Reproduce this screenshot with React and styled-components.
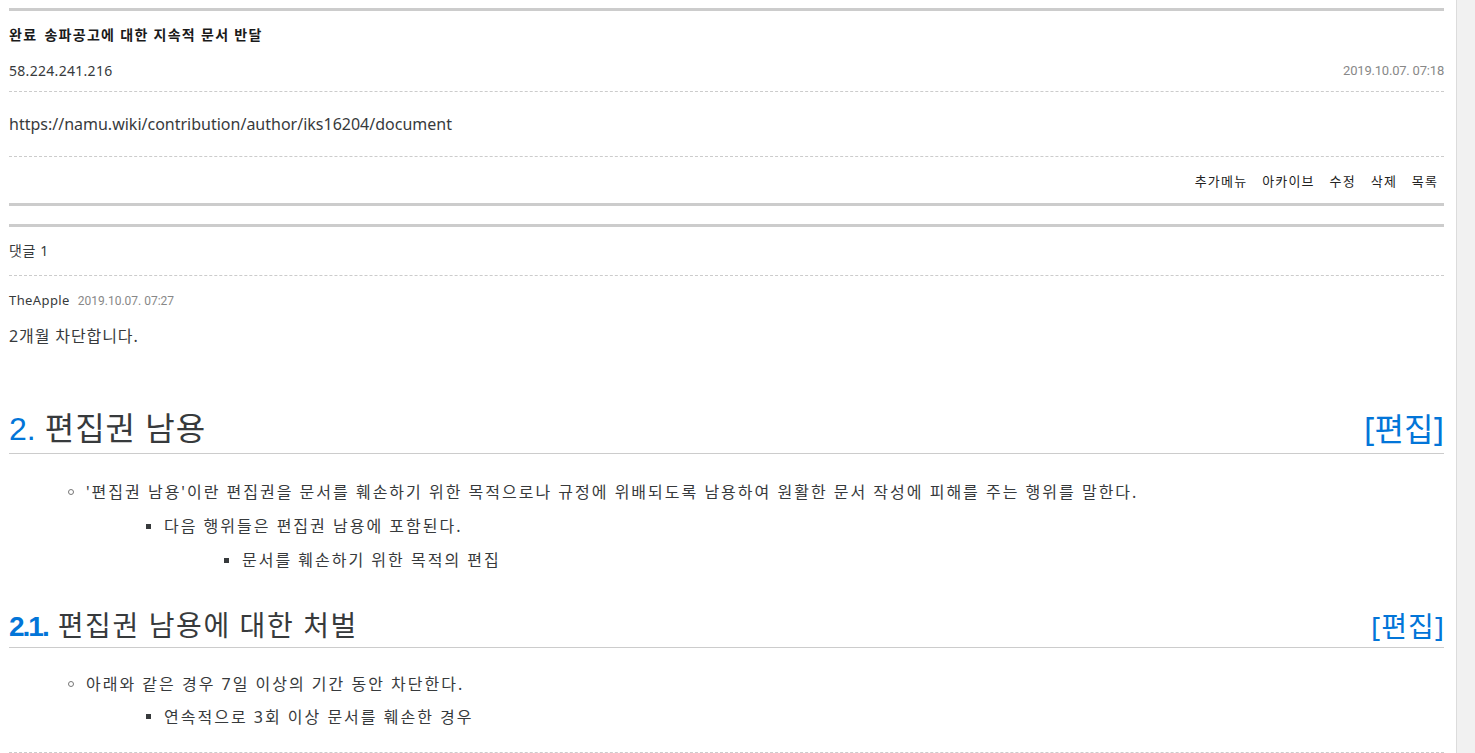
import React from 'react'
import { styled, createGlobalStyle } from "styled-components";

const GlobalStyle = createGlobalStyle`
  html, body {
    margin: 0;
    padding: 0;
    overflow: hidden;
    background: #ffffff;
  }
  body {
    font-family: "Noto Sans", "Noto Sans CJK KR", sans-serif;
    color: #373a3c;
  }
`;

const Page = styled.div`
  display: flex;
  width: 1475px;
  height: 753px;
  overflow: hidden;
`;

const Main = styled.main`
  flex: 1;
  padding: 8px 12px 0 9px;
  min-width: 0;
`;

const Scrollbar = styled.div`
  width: 18px;
  border-left: 1px solid #dcdcdc;
  background: #f1f1f1;
`;

const Thread = styled.section`
  border-top: 3px solid #cccccc;
  border-bottom: 3px solid #cccccc;
`;

const ThreadTitle = styled.h1`
  margin: 0;
  font-size: 14px;
  font-weight: 700;
  line-height: 48px;
  letter-spacing: 1.3px;
  color: #1a1a1a;
  span + span {
    margin-left: 7px;
  }
`;

const MetaRow = styled.div`
  display: flex;
  justify-content: space-between;
  align-items: center;
  height: 22px;
  padding-bottom: 10px;
  border-bottom: 1px dashed #cccccc;
  font-size: 14px;
  letter-spacing: 0.3px;
`;

const DateText = styled.span`
  font-family: Roboto, "Noto Sans", sans-serif;
  font-size: ${(p) => (p.$small ? "12px" : "13px")};
  color: #888888;
  letter-spacing: ${(p) => (p.$small ? "0" : "-0.2px")};
`;

const Body = styled.div`
  height: 64px;
  line-height: 64px;
  font-size: 16px;
  border-bottom: 1px dashed #cccccc;
`;

const Actions = styled.nav`
  display: flex;
  justify-content: flex-end;
  align-items: center;
  gap: 16px;
  height: 46px;
  padding-right: 7px;
`;

const ActionLink = styled.a`
  font-size: 13px;
  color: #222222;
  letter-spacing: 1.2px;
  margin-right: -1.2px;
`;

const Comments = styled.section`
  margin-top: 18px;
  border-top: 3px solid #cccccc;
`;

const CommentCount = styled.div`
  font-size: 14px;
  line-height: 48px;
  letter-spacing: 0.6px;
  border-bottom: 1px dashed #cccccc;
`;

const CommentHead = styled.div`
  display: flex;
  align-items: baseline;
  gap: 8px;
  margin-top: 14px;
  line-height: 20px;
  font-size: 13px;
  letter-spacing: 0.4px;
`;

const CommentText = styled.p`
  margin: 13px 0 0;
  font-size: 16px;
  line-height: 24px;
  letter-spacing: 0.9px;
`;

const Heading = styled.h2`
  display: flex;
  justify-content: space-between;
  align-items: center;
  margin: ${(p) => (p.$sub ? "29px 0 0" : "58px 0 0")};
  font-size: ${(p) => (p.$sub ? "28px" : "32px")};
  font-weight: 400;
  line-height: ${(p) => (p.$sub ? "40px" : "44px")};
  letter-spacing: ${(p) => (p.$sub ? "1.6px" : "1px")};
  padding-bottom: ${(p) => (p.$sub ? "0" : "2px")};
  border-bottom: 1px solid #cccccc;
  color: #373a3c;
`;

const Num = styled.span`
  font-family: "Liberation Sans", Arial, sans-serif;
  color: #0275d8;
  font-weight: ${(p) => (p.$bold ? 700 : 400)};
  letter-spacing: ${(p) => (p.$bold ? "-2px" : "0")};
  margin-right: ${(p) => (p.$bold ? "10px" : "9px")};
`;

const EditLink = styled.a`
  color: #0275d8;
  font-size: ${(p) => (p.$sub ? "28px" : "32px")};
  letter-spacing: ${(p) => (p.$sub ? "1px" : "0")};
  margin-right: ${(p) => (p.$sub ? "-1px" : "0")};
`;

const List = styled.ul`
  list-style: none;
  margin: ${(p) => (p.$top ? `${p.$top}px 0 0` : "0")};
  padding: 0;
`;

const Item = styled.li`
  display: flex;
  align-items: center;
  padding-left: ${(p) => p.$level * 78 - 19}px;
  height: ${(p) => p.$h}px;
  font-size: 16px;
  letter-spacing: 2px;
`;

const Bullet = styled.span`
  flex: none;
  box-sizing: border-box;
  width: ${(p) => (p.$circle ? "6px" : "5px")};
  height: ${(p) => (p.$circle ? "6px" : "5px")};
  margin-right: ${(p) => (p.$circle ? "12px" : "13px")};
  margin-top: 2px;
  border: ${(p) => (p.$circle ? "1px solid #777" : "none")};
  border-radius: ${(p) => (p.$circle ? "50%" : "0")};
  background: ${(p) => (p.$circle ? "transparent" : "#373a3c")};
`;

const Divider = styled.div`
  margin-top: 20px;
  border-top: 1px dashed #cccccc;
`;

const bullets = [
  { level: 1, circle: true, text: "'편집권 남용'이란 편집권을 문서를 훼손하기 위한 목적으로나 규정에 위배되도록 남용하여 원활한 문서 작성에 피해를 주는 행위를 말한다." },
  { level: 2, text: "다음 행위들은 편집권 남용에 포함된다." },
  { level: 3, text: "문서를 훼손하기 위한 목적의 편집" },
];

const penalty = [
  { level: 1, circle: true, text: "아래와 같은 경우 7일 이상의 기간 동안 차단한다." },
  { level: 2, text: "연속적으로 3회 이상 문서를 훼손한 경우" },
];

const Items = ({ rows, top, h }) => (
  <List $top={top}>
    {rows.map((r) => (
      <Item key={r.text} $level={r.level} $h={h}>
        <Bullet $circle={r.circle} />
        {r.text}
      </Item>
    ))}
  </List>
);

const App = () => {
  return (
    <Page>
      <GlobalStyle />
      <Main>
        <Thread>
          <ThreadTitle>
            <span>완료</span>
            <span>송파공고에 대한 지속적 문서 반달</span>
          </ThreadTitle>
          <MetaRow>
            <span>58.224.241.216</span>
            <DateText>2019.10.07. 07:18</DateText>
          </MetaRow>
          <Body>https://namu.wiki/contribution/author/iks16204/document</Body>
          <Actions>
            <ActionLink>추가메뉴</ActionLink>
            <ActionLink>아카이브</ActionLink>
            <ActionLink>수정</ActionLink>
            <ActionLink>삭제</ActionLink>
            <ActionLink>목록</ActionLink>
          </Actions>
        </Thread>
        <Comments>
          <CommentCount>댓글 1</CommentCount>
          <CommentHead>
            <span>TheApple</span>
            <DateText $small>2019.10.07. 07:27</DateText>
          </CommentHead>
          <CommentText>2개월 차단합니다.</CommentText>
        </Comments>
        <Heading>
          <span><Num>2.</Num>편집권 남용</span>
          <EditLink>[편집]</EditLink>
        </Heading>
        <Items rows={bullets} top={20} h={34} />
        <Heading $sub>
          <span><Num $bold>2.1.</Num>편집권 남용에 대한 처벌</span>
          <EditLink $sub>[편집]</EditLink>
        </Heading>
        <Items rows={penalty} top={18} h={33} />
        <Divider />
      </Main>
      <Scrollbar />
    </Page>
  );
};

export default App;
